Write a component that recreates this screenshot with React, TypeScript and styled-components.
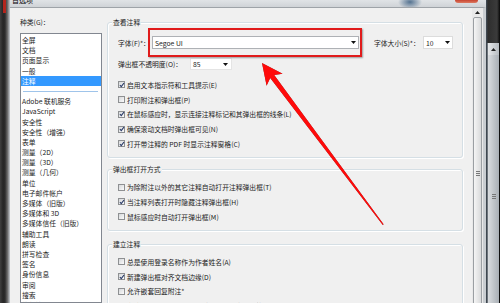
import React from 'react';
import styled, { createGlobalStyle } from 'styled-components';

const FONT = `"Noto Sans CJK SC", "Noto Sans", "DejaVu Sans", sans-serif`;

const Global = createGlobalStyle`
  html, body { margin: 0; padding: 0; background: #2a2a2a; }
  #root { width: 500px; height: 303px; }
`;

const Screen = styled.div`
  position: relative;
  width: 500px;
  height: 303px;
  overflow: hidden;
  display: flex;
  background: #2b2b2b;
  font-family: ${FONT};
  font-size: 6.8px;
  color: #1c1c1c;
`;

const LeftEdge = styled.div`
  width: 10px;
  flex: none;
  background:
    linear-gradient(to right, transparent 3px, #b3261e 3px, #b3261e 6px, transparent 6px) 0 0 / 100% 13px no-repeat,
    linear-gradient(to right, #404040 0, #262626 3px, #2c2c2c 5px, #6c6c6c 7.5px, #a2a6aa 9px, #c9cdd1 10px);
`;

const Dialog = styled.div`
  flex: none;
  width: 476px;
  display: flex;
  flex-direction: column;
`;

const TitleBar = styled.div`
  height: 7px;
  flex: none;
  display: flex;
  align-items: flex-start;
  overflow: hidden;
  padding-left: 2px;
  background:
    radial-gradient(ellipse 12px 7px at 400px 2px, rgba(60, 95, 130, 0.85), transparent),
    linear-gradient(#e0e3e6, #cfd3d7);
`;

const TitleText = styled.span`
  font-size: 7px;
  line-height: 7px;
  margin-top: -3.5px;
  color: #000;
`;

const CloseButton = styled.div`
  margin-left: auto;
  margin-right: 8px;
  width: 23px;
  height: 3px;
  background: linear-gradient(#c84430, #dc7a62);
  border-radius: 0 0 3px 3px;
`;

const Client = styled.div`
  flex: 1;
  display: flex;
  background: #f0f0f0;
  border-top: 1px solid #9ea3a8;
  border-right: 3px solid #c9cdd1;
  overflow: hidden;
`;

const Sidebar = styled.div`
  width: 94px;
  flex: none;
  display: flex;
  flex-direction: column;
  padding-left: 10px;
  box-sizing: border-box;
`;

const SideLabel = styled.div`
  margin-top: 9px;
  line-height: 10px;
  height: 10px;
  white-space: nowrap;
`;

const ListBox = styled.div`
  margin-top: 6px;
  width: 82px;
  flex: 1;
  box-sizing: border-box;
  border: 1px solid #828790;
  background: #fff;
  padding-top: 1px;
  overflow: hidden;
`;

const ListItem = styled.div<{ $selected?: boolean }>`
  height: 10.2px;
  line-height: 10.2px;
  padding-left: 1px;
  white-space: nowrap;
  background: ${(p) => (p.$selected ? '#3399ff' : 'transparent')};
  color: ${(p) => (p.$selected ? '#fff' : '#1c1c1c')};
`;

const ListSep = styled.div`
  height: 10.2px;
  display: flex;
  align-items: center;
  padding: 0 3px 0 2px;
  &::after {
    content: '';
    flex: 1;
    height: 1px;
    background: #9fc4ea;
  }
`;

const Pane = styled.div`
  flex: 1;
  display: flex;
  min-width: 0;
`;

const PaneContent = styled.div`
  flex: 1;
  display: flex;
  flex-direction: column;
  padding: 0 9px 0 3px;
  min-width: 0;
`;

const Group = styled.div<{ $mt: number }>`
  margin-top: ${(p) => p.$mt}px;
  flex: none;
  border: 1px solid #d5dfe5;
  border-radius: 3px;
  box-shadow: inset 1px 1px 0 #fff, 1px 1px 0 #fff;
  padding: 0 10px 6px 10px;
  display: flex;
  flex-direction: column;
`;

const GroupTitle = styled.div`
  align-self: flex-start;
  margin: -6px 0 0 -6px;
  padding: 0 1px;
  height: 10px;
  line-height: 10px;
  background: #f0f0f0;
  white-space: nowrap;
`;

const FieldRow = styled.div<{ $mt: number; $h: number }>`
  margin-top: ${(p) => p.$mt}px;
  height: ${(p) => p.$h}px;
  display: flex;
  align-items: center;
`;

const Label = styled.span<{ $w: number; $ml?: number }>`
  width: ${(p) => p.$w}px;
  margin-left: ${(p) => p.$ml ?? 0}px;
  flex: none;
  white-space: nowrap;
  line-height: 10px;
`;

const Combo = styled.div<{ $w: number; $h: number; $border: string; $pr: number }>`
  width: ${(p) => p.$w}px;
  height: ${(p) => p.$h}px;
  box-sizing: border-box;
  flex: none;
  border: 1px solid ${(p) => p.$border};
  background: #fff;
  display: flex;
  align-items: center;
  padding: 0 ${(p) => p.$pr}px 0 2px;
  line-height: 10px;
  & > span {
    flex: 1;
    white-space: nowrap;
  }
  & > svg {
    flex: none;
  }
`;

const Checks = styled.div<{ $mt: number }>`
  margin-top: ${(p) => p.$mt}px;
  display: flex;
  flex-direction: column;
`;

const CheckRow = styled.div`
  height: 14.75px;
  display: flex;
  align-items: center;
  gap: 2px;
  white-space: nowrap;
  line-height: 10px;
`;

const Box = styled.span`
  width: 7px;
  height: 7px;
  flex: none;
  box-sizing: border-box;
  border: 1px solid #8e9092;
  background: linear-gradient(135deg, #d6d8da, #fbfbfb);
  display: flex;
  align-items: center;
  justify-content: center;
  overflow: visible;
`;

const Scrollbar = styled.div`
  width: 11px;
  flex: none;
  display: flex;
  flex-direction: column;
  background: #e9e9e9;
`;

const ScrollBtn = styled.div`
  height: 9px;
  flex: none;
  display: flex;
  align-items: center;
  justify-content: center;
`;

const ScrollThumb = styled.div<{ $h: number }>`
  height: ${(p) => p.$h}px;
  flex: none;
  margin: 0 1px 0 1px;
  box-sizing: border-box;
  border: 1px solid #9b9fa3;
  border-radius: 2px;
  background: linear-gradient(to right, #f5f5f5, #d9dadb);
  display: flex;
  align-items: center;
  justify-content: center;
`;

const Grip = styled.div`
  width: 4px;
  height: 5px;
  background: repeating-linear-gradient(#777 0 1px, transparent 1px 2px);
`;

const RightEdge = styled.div`
  width: 14px;
  flex: none;
  display: flex;
  flex-direction: column;
  padding-top: 43px;
  box-sizing: border-box;
  background: linear-gradient(to right, #44505c 0, #2e2e2e 2px, #3b3b3b 11px, #080808 14px);
`;

const OtherBar = styled.div`
  margin-left: 1px;
  width: 11px;
  flex: 1;
  display: flex;
  flex-direction: column;
  border-left: 1px solid #6f767d;
  background: linear-gradient(to right, #e6e8ea, #b6bbc0);
`;

const OtherThumb = styled.div`
  height: 282px;
  flex: none;
  display: flex;
  align-items: center;
  justify-content: center;
  background: linear-gradient(to right, #d9dcdf, #a9afb5);
`;

const Highlight = styled.div`
  position: absolute;
  left: 148px;
  top: 28px;
  width: 214px;
  height: 29px;
  box-sizing: border-box;
  border: 2px solid #e01b1b;
  box-shadow: 1px 1px 1.5px rgba(0, 0, 0, 0.35);
  pointer-events: none;
`;

const ArrowLayer = styled.svg`
  position: absolute;
  left: 0;
  top: 0;
  pointer-events: none;
  filter: drop-shadow(0.6px 0.6px 0.7px rgba(0, 0, 0, 0.6));
`;

const DownTri = () => (
  <svg width="5" height="3" viewBox="0 0 5 3">
    <path d="M0 0H5L2.5 3Z" fill="#111" />
  </svg>
);

const UpTri = () => (
  <svg width="5" height="3" viewBox="0 0 5 3">
    <path d="M0 3H5L2.5 0Z" fill="#222" />
  </svg>
);

const CheckBox = ({ on }: { on: boolean }) => (
  <Box>
    {on && (
      <svg width="6" height="6" viewBox="0 0 6 6" style={{ overflow: 'visible' }}>
        <path d="M0.9 3.1 L2.3 4.6 L5 1" fill="none" stroke="#2c3d6a" strokeWidth="1.2" />
      </svg>
    )}
  </Box>
);

type Item = [boolean, string];

const CheckList = ({ items, mt }: { items: Item[]; mt: number }) => (
  <Checks $mt={mt}>
    {items.map(([on, text]) => (
      <CheckRow key={text}>
        <CheckBox on={on} />
        <span>{text}</span>
      </CheckRow>
    ))}
  </Checks>
);

const SEP = '__sep__';
const categories = [
  '全屏', '文档', '页面显示', '一般', '注释', SEP,
  'Adobe 联机服务', 'JavaScript', '安全性', '安全性（增强）', '表单',
  '测量（2D）', '测量（3D）', '测量（几何）', '单位', '电子邮件帐户',
  '多媒体（旧版）', '多媒体和 3D', '多媒体信任（旧版）', '辅助工具', '朗读',
  '拼写检查', '签名', '身份信息', '审阅', '搜索', '信任管理器',
];

const viewItems: Item[] = [
  [true, '启用文本指示符和工具提示(E)'],
  [false, '打印附注和弹出框(P)'],
  [true, '在鼠标感应时，显示连接注释标记和其弹出框的线条(L)'],
  [true, '确保滚动文档时弹出框可见(N)'],
  [true, '打开带注释的 PDF 时显示注释窗格(C)'],
];

const popupItems: Item[] = [
  [false, '为除附注以外的其它注释自动打开注释弹出框(T)'],
  [true, '当注释列表打开时隐藏注释弹出框(H)'],
  [false, '鼠标感应时自动打开弹出框(M)'],
];

const createItems: Item[] = [
  [false, '总是使用登录名称作为作者姓名(A)'],
  [true, '新建弹出框对齐文档边缘(D)'],
  [false, '允许嵌套回复附注*'],
  [false, '在注释工具、选择工具和手形工具间自动切换'],
];

const arrowPoints = [
  [262, 63], [282.6, 73.8], [274.2, 75.1], [383.6, 224.3],
  [382.8, 224.9], [270.2, 78.1], [266.6, 85.8],
]
  .map((p) => p.join(','))
  .join(' ');

export default function App() {
  return (
    <>
      <Global />
      <Screen>
        <LeftEdge />
        <Dialog>
          <TitleBar>
            <TitleText>首选项</TitleText>
            <CloseButton />
          </TitleBar>
          <Client>
            <Sidebar>
              <SideLabel>种类(G)：</SideLabel>
              <ListBox>
                {categories.map((c) =>
                  c === SEP ? (
                    <ListSep key={c} />
                  ) : (
                    <ListItem key={c} $selected={c === '注释'}>
                      {c}
                    </ListItem>
                  ),
                )}
              </ListBox>
            </Sidebar>
            <Pane>
              <PaneContent>
                <Group $mt={14}>
                  <GroupTitle>查看注释</GroupTitle>
                  <FieldRow $mt={9} $h={13}>
                    <Label $w={34}>字体(F)*：</Label>
                    <Combo $w={207} $h={13} $border="#aeb1b5" $pr={2}>
                      <span>Segoe UI</span>
                      <DownTri />
                    </Combo>
                    <Label $w={49} $ml={15}>字体大小(S)*：</Label>
                    <Combo $w={30} $h={13} $border="#dcdcdc" $pr={2}>
                      <span>10</span>
                      <DownTri />
                    </Combo>
                  </FieldRow>
                  <FieldRow $mt={9} $h={12}>
                    <Label $w={72}>弹出框不透明度(O)：</Label>
                    <Combo $w={42} $h={12} $border="#e4e4e4" $pr={3}>
                      <span>85</span>
                      <DownTri />
                    </Combo>
                  </FieldRow>
                  <CheckList items={viewItems} mt={7.6} />
                </Group>
                <Group $mt={11}>
                  <GroupTitle>弹出框打开方式</GroupTitle>
                  <CheckList items={popupItems} mt={5.5} />
                </Group>
                <Group $mt={13}>
                  <GroupTitle>建立注释</GroupTitle>
                  <CheckList items={createItems} mt={5.5} />
                </Group>
              </PaneContent>
              <Scrollbar>
                <ScrollBtn>
                  <UpTri />
                </ScrollBtn>
                <ScrollThumb $h={312}>
                  <Grip />
                </ScrollThumb>
              </Scrollbar>
            </Pane>
          </Client>
        </Dialog>
        <RightEdge>
          <OtherBar>
            <ScrollBtn style={{ height: 12 }}>
              <UpTri />
            </ScrollBtn>
            <OtherThumb>
              <Grip />
            </OtherThumb>
          </OtherBar>
        </RightEdge>
        <Highlight />
        <ArrowLayer width="500" height="303" viewBox="0 0 500 303">
          <polygon points={arrowPoints} fill="#ff0a0a" />
        </ArrowLayer>
      </Screen>
    </>
  );
}
